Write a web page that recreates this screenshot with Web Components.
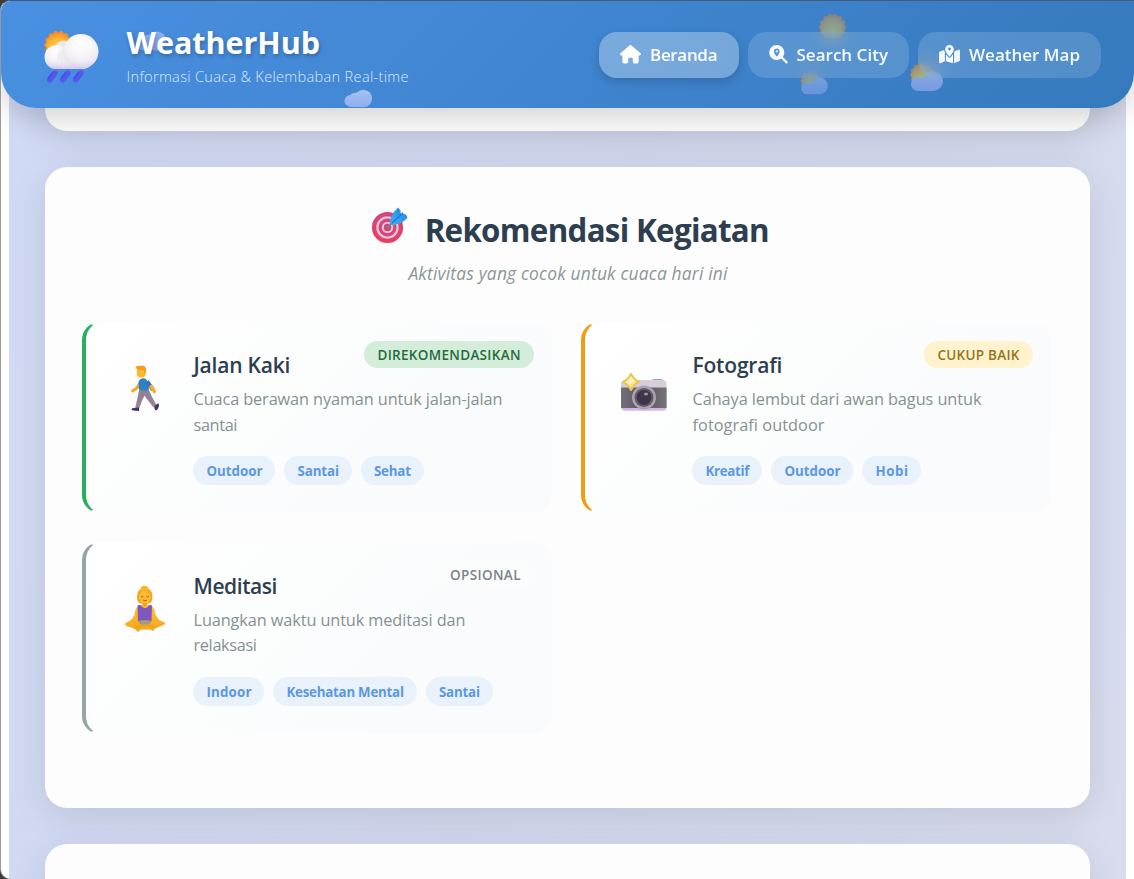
<!DOCTYPE html>
<html lang="id">
<head>
<meta charset="utf-8">
<title>WeatherHub</title>
<style>
html{background:#3c3c3d}
body{margin:0;font-family:"Open Sans","Noto Sans",sans-serif;color:#2c3e50;height:879px;overflow:hidden}
</style>
</head>
<body>
<weather-app></weather-app>
<script>
const define = (name, html, setup) => customElements.define(name, class extends HTMLElement {
  connectedCallback() {
    if (this.shadowRoot) return;
    const root = this.attachShadow({mode: 'open'});
    const t = document.createElement('template');
    t.innerHTML = typeof html === 'function' ? html(this) : html;
    root.append(t.content.cloneNode(true));
    if (setup) setup(this, root);
  }
});

const cloudDefs = `<defs>
<radialGradient id="sun" cx=".5" cy=".65" r=".6"><stop offset="0" stop-color="#ffe14a"/><stop offset=".55" stop-color="#fcbf35"/><stop offset="1" stop-color="#f6902c"/></radialGradient>
<radialGradient id="puff" cx=".5" cy=".3" r=".8"><stop offset="0" stop-color="#fff"/><stop offset=".55" stop-color="#f3f1f5"/><stop offset="1" stop-color="#dcd7e4"/></radialGradient>
<linearGradient id="base" x1="0" y1="0" x2="0" y2="1"><stop offset=".45" stop-color="#e9e4f6" stop-opacity="0"/><stop offset="1" stop-color="#d8c4f8"/></linearGradient>
<linearGradient id="lil" gradientUnits="userSpaceOnUse" x1="0" y1="2" x2="0" y2="26"><stop offset="0" stop-color="#cfdcff"/><stop offset="1" stop-color="#b0b4fb"/></linearGradient></defs>`;
const sunPath = (cx, cy, r) => {
  let s = '';
  for (let i = 0; i < 28; i++) {
    const a = i * Math.PI / 14, q = i % 2 ? r * .87 : r;
    s += (i ? 'L' : 'M') + (cx + q * Math.cos(a)).toFixed(2) + ' ' + (cy + q * Math.sin(a)).toFixed(2);
  }
  return `<path d="${s}Z" fill="url(#sun)" stroke="#f38b2c" stroke-width="${r*.08}" stroke-linejoin="round"/>`;
};
const art = {
  rain: ['0 0 56 54', cloudDefs + sunPath(14.5,15,14) + `
    <circle cx="20" cy="20" r="9.500" fill="#e9e7ec"/><path d="M12 24H40V39H12Z" fill="#ebe8f0"/>
    <circle cx="12.500" cy="27" r="12" fill="url(#puff)"/><circle cx="24" cy="28" r="11" fill="#eeecf1"/><circle cx="37" cy="21.500" r="17.500" fill="url(#puff)"/>
    <path d="M.5 27A11.7 11.7 0 0 0 12 39H37A17.5 17.5 0 0 0 54 23Z" fill="url(#base)"/>
    <g stroke="#5557f0" stroke-width="5.4" stroke-linecap="round"><path d="M11 43L5.8 49.8M24 43L18.8 49.8M37 43L31.8 49.8"/></g>
    <g stroke="#434be0" stroke-width="1.4" stroke-linecap="round"><path d="M8.500 42.500L4 48.300M21.500 42.500L17 48.300M34.500 42.500L30 48.300"/></g>`],
  cloud: ['0 0 30 20', cloudDefs + `<g fill="url(#lil)"><circle cx="20" cy="10" r="9.300"/><circle cx="6.5" cy="12.500" r="6.300"/><circle cx="11" cy="9.5" r="5.6"/><path d="M6.5 12H21V19H6.5Z"/></g>`],
  sun: ['0 0 30 30', cloudDefs + sunPath(15,15,14)],
  partly: ['0 0 34 30', cloudDefs + sunPath(12,13,12) + `<g fill="url(#lil)"><circle cx="23" cy="19" r="10"/><circle cx="8" cy="22" r="7"/><path d="M8 16H24V29H8Z"/></g>`],
  target: ['0 0 44 44', `<defs><linearGradient id="tr" x1="0" y1="0" x2="0" y2="1"><stop offset="0" stop-color="#cc4880"/><stop offset="1" stop-color="#ea3d5e"/></linearGradient><linearGradient id="tb" x1="1" y1="0" x2="0" y2="1"><stop stop-color="#1d7fe8"/><stop offset="1" stop-color="#45b5ee"/></linearGradient></defs>
    <circle cx="21.5" cy="24.5" r="15.6" fill="url(#tr)"/><circle cx="21.5" cy="24.5" r="11.2" fill="#ddc4dc"/><circle cx="21.5" cy="24.5" r="9" fill="#d84474"/><circle cx="21.5" cy="24.5" r="5.8" fill="#dfc5dc"/><circle cx="21.5" cy="24.5" r="3.7" fill="#d5446f"/>
    <path d="M21.5 24.5L28 18" stroke="#78849d" stroke-width="2.2" stroke-linecap="round"/><path d="M23.5 17.5L27.5 9.5L32 4.5L34.5 7.5V10.2L40 11.5L41.5 15L36 19.5L27 22.5Z" fill="url(#tb)"/><path d="M26 20L37 9.7" stroke="#1d78cf" stroke-width="1.3"/>`],
  walk: ['0 0 48 48', `<defs><linearGradient id="wg" x1="0" y1="0" x2="0" y2="1"><stop stop-color="#8a8196"/><stop offset="1" stop-color="#9b8492"/></linearGradient></defs>
    <path d="M20 17L16 24L11.500 27" fill="none" stroke="#f5a91b" stroke-width="3" stroke-linecap="round" stroke-linejoin="round"/>
    <path d="M18.500 24H27L31 33L35.500 41L32.500 43.500L25.500 34.500L23.500 31.500L20.500 38L18 45H14L16 36Z" fill="url(#wg)"/>
    <path d="M33.500 44.500Q32.800 41.700 35.500 40.500L37.500 39.300Q39 42 36 46Q34 47 33.500 44.500ZM11 44.200L18 43.500V47Q14 47 10.500 46Z" fill="#423066"/>
    <path d="M17.500 18Q19.500 13 24 14.500Q28 16.500 27.800 25.500Q22 28 17.800 25Z" fill="#317fc6"/>
    <path d="M26 17.500L30 23L32 26" fill="none" stroke="#2c78bd" stroke-width="4"/><path d="M30 22.500L33.500 27.500" stroke="#faae1c" stroke-width="3.200" stroke-linecap="round"/>
    <rect x="15.800" y="3" width="8.700" height="10.500" rx="4" fill="#ffb62c"/><path d="M15 4Q14.800 1.800 18 1.700L22 1.800Q25.800 2.500 25 7.500L24 11L22.700 6H16.500Z" fill="#f99c1c"/>`],
  camera: ['0 0 48 48', `<defs><linearGradient id="cg"><stop stop-color="#737079"/><stop offset=".5" stop-color="#57545d"/><stop offset="1" stop-color="#77747c"/></linearGradient><linearGradient id="cy" x1="0" y1="0" x2="1" y2="1"><stop stop-color="#ffe46b"/><stop offset=".5" stop-color="#fff0c1"/><stop offset="1" stop-color="#e8ad2e"/></linearGradient></defs>
    <rect x="32" y="15" width="11" height="4" rx="1.5" fill="#aaa4b0"/><path d="M1 20Q1 16 6 16H42Q46.500 16 46.500 20V44Q46.500 46.500 44 46.500H4Q1.200 46.500 1.200 44Z" fill="#d7ceda"/><rect x="1" y="23.500" width="45.600" height="20.500" fill="url(#cg)"/><path d="M2 44H46Q45.500 46.500 43 46.500H5Q2.500 46.500 2 44Z" fill="#d3b2ef"/>
    <circle cx="24" cy="33.500" r="12" fill="#aaa3af"/><circle cx="24" cy="33.500" r="9.500" fill="#625c69"/><circle cx="24" cy="33.500" r="7.400" fill="#3e3549"/><ellipse cx="26" cy="30" rx="2.200" ry="1.600" fill="#9a8dad"/>
    <path d="M11 10Q14 15.500 19 18Q14 20.500 11 26Q8 20.500 3 18Q8 15.500 11 10Z" fill="url(#cy)" stroke="#e9c556" stroke-width="2" stroke-linejoin="round"/>`],
  yoga: ['0 0 48 48', `<defs><linearGradient id="yg" x1="0" y1="0" x2="0" y2="1"><stop stop-color="#ffc233"/><stop offset="1" stop-color="#f6a51a"/></linearGradient></defs>
    <path d="M18 20Q13.500 24 13.500 30L10 35L4 38.500Q4 41 8.500 42L14 44L17 47L20 44.500H29L32 46L34 43.500L40 41Q44 40 44 37.500L38 35L34 29Q34 23 30 20Z" fill="url(#yg)"/>
    <path d="M16.500 20.500Q20 19 21 21.500Q24 24.500 27 21.500Q28 19 31 20.500L30.500 36H17Z" fill="#8057be"/><path d="M17 36Q24 34 30.500 36L28.500 39.500H19.500Z" fill="#a7987e"/><path d="M14 43Q24 38.500 34 42" stroke="#ef9c16" fill="none"/>
    <path d="M16 12Q16 3 23.700 3Q31.500 3 31.500 12Q31.500 18 27 18.500H20Q16 18 16 12Z" fill="#f7a51e"/><circle cx="23.500" cy="4.800" r="4" fill="#f9b428"/><path d="M18 12Q18 7 24 6.500Q29.300 7 29.500 12Q29 18.500 23.700 18.700Q18.500 18.500 18 12Z" fill="#fdbb34"/><path d="M20 11.500q1.300 1 2.500 0M25.500 11.500q1.300 1 2.500 0M22 15q2 1.500 4 0" stroke="#b9681c" stroke-width="1" fill="none"/><path d="M21.500 18H26V20.500Q24 22.500 21.500 20.500Z" fill="#f5a21b"/>`],
  house: ['0 0 576 512', `<path fill="currentColor" d="M575.8 255.5c0 18-15 32.1-32 32.1h-32l.7 160.2c0 2.700-.2 5.400-.5 8.100V472c0 22.100-17.900 40-40 40H392c-22.100 0-40-17.900-40-40V384c0-17.700-14.300-32-32-32H256c-17.700 0-32 14.300-32 32v88c0 22.100-17.900 40-40 40H104c-22.100 0-40-17.900-40-40V287.600H32c-18 0-32-14-32-32.100c0-9 3-17 10-24L266.400 8c7-7 15-8 22-8s15 2 21 7L564.800 231.500c8 7 12 15 11 24z"/>`],
  search: ['0 0 512 512', `<path fill="currentColor" fill-rule="evenodd" d="M416 208c0 45.900-14.900 88.300-40 122.700L502.600 457.400c12.500 12.500 12.500 32.800 0 45.300s-32.800 12.500-45.300 0L330.700 376c-34.400 25.200-76.800 40-122.700 40C93.100 416 0 322.900 0 208S93.100 0 208 0S416 93.100 416 208zM288 176c0-44.200-35.800-80-80-80s-80 35.800-80 80c0 48.800 46.500 111.600 68.600 138.600c6 7.300 16.800 7.300 22.700 0C241.400 287.600 288 224.800 288 176zM176 176a32 32 0 1 0 64 0a32 32 0 1 0-64 0z"/>`],
  map: ['0 0 576 512', `<path fill="currentColor" fill-rule="evenodd" d="M408 120c0 54.600-73.100 151.900-105.200 192c-7.700 9.600-22 9.600-29.600 0C241.100 271.900 168 174.600 168 120C168 53.700 221.700 0 288 0s120 53.700 120 120zm8 80.400c3.500-6.900 6.700-13.800 9.600-20.600c.5-1.200 1-2.500 1.500-3.700l116-46.400C558.900 123.400 576 135 576 152V422.800c0 9.800-6 18.600-15.100 22.300L416 503V200.400zM137.600 138.300c2.400 14.100 7.200 28.300 12.800 41.500c2.900 6.800 6.100 13.700 9.600 20.600V451.800L32.900 502.700C17.100 509 0 497.400 0 480.400V209.600c0-9.800 6-18.600 15.100-22.300l122.600-49zM327.800 332c13.900-17.400 35.700-45.700 56.200-77V504.300L192 449.400V255c20.500 31.300 42.300 59.600 56.200 77c20.500 25.600 59.100 25.600 79.600 0zM288 152a40 40 0 1 0 0-80 40 40 0 1 0 0 80z"/>`]
};

define('weather-app', `<style>
:host{display:block;position:relative;height:879px;box-sizing:border-box;overflow:hidden;background:#fff;border-left:1px solid #999;border-top:1px solid #445a78;border-radius:10px 0 0 10px}
main{height:878px;margin:0 8px;box-sizing:border-box;padding:0 35.600px 0 36.400px;display:flex;flex-direction:column;gap:36px;background:linear-gradient(105deg,#d1daf5,#d3d8ee 50%,#d8dcee)}
.title{display:flex;justify-content:center;align-items:center;gap:14.500px;height:44px;padding-top:1px;font-size:31.300px;font-weight:700}
.title svg-art{margin-top:-10px}
.sub{height:26px;margin-top:8px;text-align:center;font-size:17.400px;font-style:italic;color:#8b9798;line-height:26px}
.grid{display:grid;grid-template-columns:470px 470px;grid-auto-rows:191.500px;gap:29px;margin-top:35.500px}
</style>
<app-header></app-header>
<main>
<panel-card style="height:130px"></panel-card>
<panel-card style="height:641px">
 <div class="title"><svg-art name="target" w="44" h="44"></svg-art><fit-text w="345">Rekomendasi Kegiatan</fit-text></div>
 <div class="sub"><fit-text w="319">Aktivitas yang cocok untuk cuaca hari ini</fit-text></div>
 <div class="grid">
  <activity-card icon="walk" accent="#27ae60" badge="#d4edda" ink="#256b3c">
   <fit-text slot="badge" w="143">DIREKOMENDASIKAN</fit-text><fit-text slot="name" w="97">Jalan Kaki</fit-text>
   <fit-text slot="text" w="309">Cuaca berawan nyaman untuk jalan-jalan</fit-text><fit-text slot="text" w="44">santai</fit-text>
   <tag-pill slot="tags" w="56">Outdoor</tag-pill><tag-pill slot="tags" w="41.500">Santai</tag-pill><tag-pill slot="tags" w="37">Sehat</tag-pill>
  </activity-card>
  <activity-card icon="camera" accent="#f39c12" badge="#fff3cd" ink="#957323">
   <fit-text slot="badge" w="82">CUKUP BAIK</fit-text><fit-text slot="name" w="90">Fotografi</fit-text>
   <fit-text slot="text" w="289">Cahaya lembut dari awan bagus untuk</fit-text><fit-text slot="text" w="132">fotografi outdoor</fit-text>
   <tag-pill slot="tags" w="44">Kreatif</tag-pill><tag-pill slot="tags" w="56">Outdoor</tag-pill><tag-pill slot="tags" w="32.500">Hobi</tag-pill>
  </activity-card>
  <activity-card icon="yoga" accent="#95a5a6" badge="#fbfcfc" ink="#7b828a">
   <fit-text slot="badge" w="70.500">OPSIONAL</fit-text><fit-text slot="name" w="84">Meditasi</fit-text>
   <fit-text slot="text" w="272">Luangkan waktu untuk meditasi dan</fit-text><fit-text slot="text" w="63.500">relaksasi</fit-text>
   <tag-pill slot="tags" w="45">Indoor</tag-pill><tag-pill slot="tags" w="117.500">Kesehatan Mental</tag-pill><tag-pill slot="tags" w="41">Santai</tag-pill>
  </activity-card>
 </div>
</panel-card>
<panel-card style="height:200px"></panel-card>
</main>`);

define('panel-card', `<style>
:host{display:block;flex:none;box-sizing:border-box;padding:40px 36.600px 0;border-radius:22px;background:#fdfdfd;box-shadow:0 9px 36px rgba(0,0,0,.1)}
</style><slot></slot>`);

define('app-header', `<style>
:host{display:block;position:absolute;z-index:2;left:0;right:0;top:0;height:107px;box-sizing:border-box;padding:0 33px 0 43px;border-radius:9px 0 35px 35px;background:linear-gradient(135deg,#4a90e2,#357abd);color:#fff;box-shadow:0 8px 30px rgba(0,0,0,.18)}
.row{position:relative;display:flex;align-items:center;height:107px}
.brand{margin-left:26.500px;padding-top:3px;display:flex;flex-direction:column;align-items:flex-start}
.name{font-size:30.500px;line-height:39.500px;font-weight:700;text-shadow:1px 2px 4px rgba(0,0,0,.28)}
.tag{font-size:14.600px;line-height:26px;font-weight:350;color:#dcebfb}
nav{margin-left:auto;display:flex;gap:9px}
.float{position:absolute}
</style>
<svg-art class="float" name="cloud" w="31" h="24" style="left:135px;top:28px;opacity:.5"></svg-art>
<svg-art class="float" name="cloud" w="29" h="19" style="left:343px;top:88px;opacity:.68"></svg-art>
<svg-art class="float" name="sun" w="29" h="29" style="left:817px;top:12px;opacity:.42"></svg-art>
<svg-art class="float" name="partly" w="29" h="25" style="left:799px;top:69px;opacity:.4"></svg-art>
<svg-art class="float" name="partly" w="34" h="30" style="left:909px;top:61px;opacity:.55"></svg-art>
<div class="row">
 <svg-art name="rain" w="56" h="54" style="margin-top:4px"></svg-art>
 <div class="brand"><div class="name"><fit-text w="193.500">WeatherHub</fit-text></div><div class="tag"><fit-text w="282">Informasi Cuaca &amp; Kelembaban Real-time</fit-text></div></div>
 <nav><nav-pill active icon="house" iw="21" w="67.500">Beranda</nav-pill><nav-pill icon="search" iw="19" w="91.500">Search City</nav-pill><nav-pill icon="map" iw="21" w="111">Weather Map</nav-pill></nav>
</div>`);

define('nav-pill', el => `<style>
:host{display:flex;box-sizing:border-box;align-items:center;gap:9px;height:46px;padding:0 21px;border-radius:18px;background:rgba(255,255,255,.15);backdrop-filter:blur(9px);font-size:17px;font-weight:650;line-height:47px;color:#f5faff}
:host([active]){background:rgba(255,255,255,.3);box-shadow:0 4px 10px rgba(0,0,0,.16);color:#fff}
</style><svg-art name="${el.getAttribute('icon')}" w="${el.getAttribute('iw')}" h="18.500"></svg-art><fit-text w="${el.getAttribute('w')}">${el.textContent}</fit-text>`);

define('activity-card', el => `<style>
:host{display:flex;position:relative;box-sizing:border-box;padding:27.500px 18px 0 35px;gap:24.500px;align-items:flex-start;border:1px solid rgba(255,255,255,.35);border-left:4px solid ${el.getAttribute('accent')};border-radius:18px;background:linear-gradient(135deg,#fff,#f8fafb) border-box}
svg-art{margin-top:14px}
.copy{display:flex;flex-direction:column;align-items:flex-start}
.name{height:30px;font-size:21px;line-height:30px;font-weight:600}
.text{display:flex;flex-direction:column;align-items:flex-start;margin-top:7px;font-size:16.300px;line-height:25.600px;color:#849192}
.tags{display:flex;gap:9px;margin-top:18px}
.badge{position:absolute;top:18px;right:17px;height:27px;padding:0 13.500px;border-radius:14px;font-size:13.500px;font-weight:650;line-height:28.500px;background:${el.getAttribute('badge')};color:${el.getAttribute('ink')}}
</style>
<svg-art name="${el.getAttribute('icon')}" w="48" h="48"></svg-art>
<div class="copy"><div class="name"><slot name="name"></slot></div><div class="text"><slot name="text"></slot></div><div class="tags"><slot name="tags"></slot></div></div>
<div class="badge"><slot name="badge"></slot></div>`);

define('tag-pill', el => `<style>
:host{display:block;height:29px;padding:0 13px;border-radius:15px;background:#e9f1fb;color:#5a98e2;font-size:13.300px;font-weight:680;line-height:30px}
</style><fit-text w="${el.getAttribute('w')}">${el.textContent}</fit-text>`);

define('svg-art', el => {
  const [box, body] = art[el.getAttribute('name')];
  return `<style>:host{display:block;flex:none}svg{display:block}</style><svg width="${el.getAttribute('w')}" height="${el.getAttribute('h')}" viewBox="${box}">${body}</svg>`;
});

// Tracks a single line of text so that it fills the width given by "w".
define('fit-text', `<style>:host{display:inline-block;white-space:nowrap;vertical-align:top}span{display:inline-block}</style><span><slot></slot></span>`, (el, root) => {
  const w = +el.getAttribute('w'), span = root.querySelector('span');
  const n = el.textContent.length;
  span.style.letterSpacing = ((w - span.getBoundingClientRect().width) / (n - 1)).toFixed(3) + 'px';
  el.style.width = w + 'px';
});
</script>
</body>
</html>
